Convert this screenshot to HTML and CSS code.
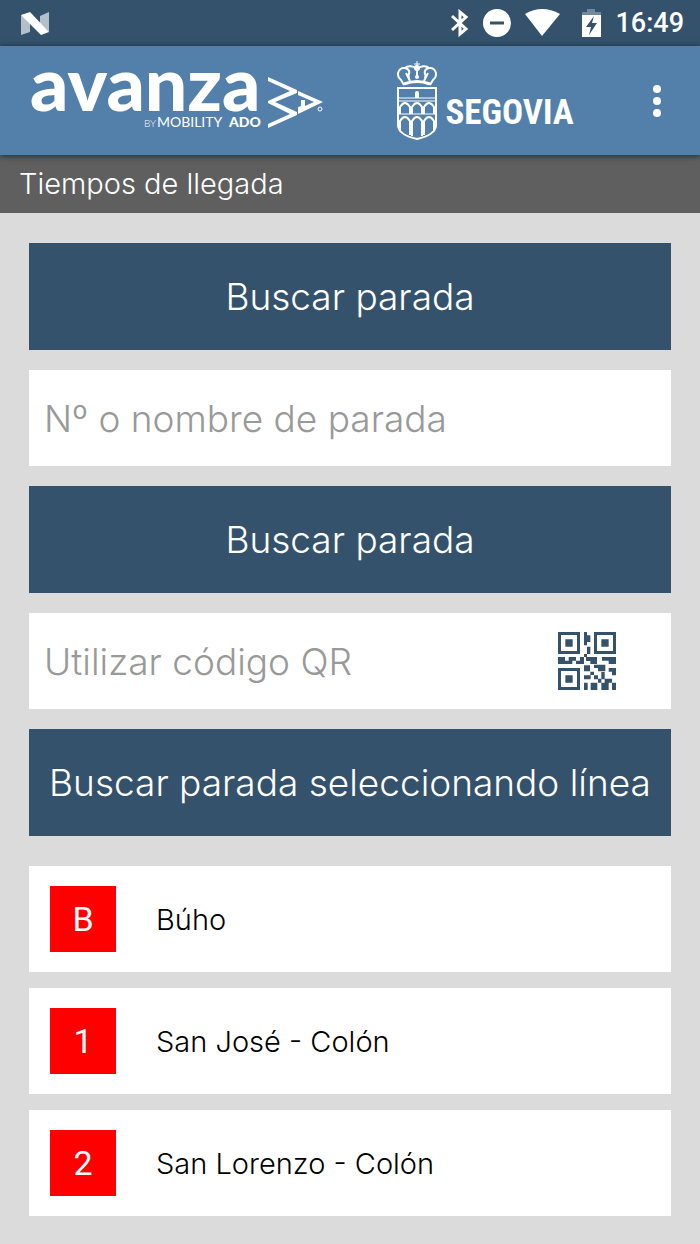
FILE: index.html
```html
<!DOCTYPE html>
<html lang="es">

<head>
    <meta charset="UTF-8">
    <meta name="viewport" content="width=device-width, initial-scale=1.0">
    <title>Tiempos de llegada</title>
    <link rel="stylesheet" href="styles.css">
</head>

<body>

    <div class="status-bar">
        <svg class="android" width="28" height="23" viewBox="0 0 28 23">
            <path d="M0 3L9 9V20L0 23zM19 4L28 0V20L19 12z" fill="#b3c0ca"/>
            <path d="M0 3L9 0L28 20L20 23z" fill="#fff"/>
        </svg>
        <div class="status-icons">
            <svg width="18" height="28" viewBox="0 0 18 28" fill="none" stroke="#fff" stroke-width="3">
                <path d="M1 7L15 20L9 25V3L15 8L1 21"/>
            </svg>
            <svg width="28" height="28" viewBox="0 0 28 28">
                <circle cx="14" cy="14" r="14" fill="#fff"/>
                <path d="M7 14H21" stroke="#34526c" stroke-width="3"/>
            </svg>
            <svg class="wifi" width="35" height="28" viewBox="0 0 35 28">
                <path d="M0 5Q17 -5 35 5L17 27z" fill="#fff"/>
            </svg>
            <svg width="19" height="28" viewBox="0 0 19 28">
                <path d="M0 3H5V0H13V3H19V8H0z" fill="#7188a0"/>
                <path d="M0 6H19V28H0z" fill="#fff"/>
                <path d="M12 7L4 18H9L7 26L15 14H10z" fill="#34526c"/>
            </svg>
            <span class="clock">16:49</span>
        </div>
    </div>

    <header class="header">
        <svg class="avanza" width="294" height="64" viewBox="0 0 294 64" fill="#fff">
            <text class="avanza-name" x="-1" y="42">avanza</text>
            <text class="avanza-by" x="113" y="58">BY</text>
            <text class="avanza-mobility" x="126" y="58">MOBILITY</text>
            <text class="avanza-ado" x="198" y="58">ADO</text>
            <path d="M237 8L266 21V24L244 33L266 43V46L237 59V55L259 45L237 34V32L259 22L237 12z"/>
            <path fill-rule="evenodd" d="M267 22L292 33L267 45V38L270 37V31H274V37L283 33L267 26z"/>
            <circle cx="289" cy="40" r="2" fill="none" stroke="#fff"/>
        </svg>
        <div class="segovia">
            <svg width="40" height="79" viewBox="0 0 40 79" fill="none" stroke="#fff" stroke-width="2">
                <path d="M20 0V6M17 3H23" stroke-width="1"/>
                <path d="M7 24L4 19C-2 14 2 6 8 7C13 8 13 12 11 15M8 7C11 4 17 5 20 8M33 24L36 19C42 14 38 6 32 7C27 8 27 12 29 15M32 7C29 4 23 5 20 8V15M9 12L13 20M31 12L27 20"/>
                <path d="M7 23Q20 18 33 23" stroke-width="3"/>
                <g fill="#fff" stroke="none">
                    <circle cx="20" cy="7" r="3"/>
                    <circle cx="20" cy="16" r="2"/>
                    <circle cx="12" cy="16" r="1"/>
                    <circle cx="28" cy="16" r="1"/>
                </g>
                <path d="M1 27H39V65C38 73 29 76 20 78C11 76 2 73 1 65z"/>
                <path d="M1 37H39M1 40H39M1 53H39" stroke-width="1"/>
                <path d="M19 36V32A1 1 0 0 1 21 32V36z" fill="#fff"/>
                <path d="M3 53V46Q8 38 13 46V53M15 53V46Q20 38 25 46V53M27 53V46Q32 38 37 46V53M3 69V60Q8 52 13 60V74M15 75V60Q20 52 25 60V75M27 74V60Q32 52 37 60V69"/>
            </svg>
            <span class="segovia-name">SEGOVIA</span>
        </div>
        <button class="menu" type="button" aria-label="Menú">
            <svg width="8" height="32" viewBox="0 0 8 32" fill="#fff">
                <circle cx="4" cy="4" r="4"/>
                <circle cx="4" cy="16" r="4"/>
                <circle cx="4" cy="28" r="4"/>
            </svg>
        </button>
    </header>

    <h1 class="title">Tiempos de llegada</h1>

    <main class="content">
        <form class="search">
            <button class="bar" type="submit">Buscar parada</button>
            <input class="field" type="text" aria-label="Nº o nombre de parada" placeholder="Nº o nombre de parada">
            <button class="bar" type="button">Buscar parada</button>
            <button class="field qr" type="button">
                <span>Utilizar código QR</span>
                <svg width="58" height="58" viewBox="0 0 174 174" fill="#34526c">
                    <path fill-rule="evenodd" d="M0 0h66v66H0zM9 9v48h48V9zM108 0h66v66h-66zM117 9v48h48V9zM0 108h66v66H0zM9 117v48h48v-48z"/>
                    <path d="M22 22h22v22H22zM130 22h22v22h-22zM22 130h22v22H22z"/>
                    <path d="M78 0h9v10h10v20h-10v10h-9zM87 44h10v22h-10zM78 66h9v9h-9z"/>
                    <path d="M0 75h21v11h11v10H0zM32 75h22v11H43v10H32zM66 75h12v21H54V86h12zM84 75h33v21H97v-9H84zM132 75h42v21h-22V86h-20z"/>
                    <path d="M78 100h18v18H78zM108 98h34v20h-22v-10h-12zM152 108h22v22h-12v-11h-10zM97 119h11v10H97zM78 130h20v12H78zM108 130h12v10h10v12h-10v-10h-12zM130 120h10v22h-10zM78 152h11v22H78zM98 152h20v22H98zM130 152h22v22h-22zM140 140h22v12h12v22h-12v-22h-22z"/>
                </svg>
            </button>
            <button class="bar" type="button">Buscar parada seleccionando línea</button>
        </form>

        <div class="lines">
            <a class="line" href="#">
                <span class="line-code">B</span>
                <span>Búho</span>
            </a>
            <a class="line" href="#">
                <span class="line-code">1</span>
                <span>San José - Colón</span>
            </a>
            <a class="line" href="#">
                <span class="line-code">2</span>
                <span>San Lorenzo - Colón</span>
            </a>
        </div>
    </main>

</body>

</html>
```

FILE: styles.css
```css
* {
    box-sizing: border-box;
}

body {
    margin: 0;
    background-color: #dbdbdb;
    font-family: Inter, sans-serif;
    font-weight: 300;
}

svg {
    display: block;
    flex-shrink: 0;
}

.status-bar {
    display: flex;
    align-items: center;
    justify-content: space-between;
    height: 46px;
    padding: 0 16px 0 21px;
    background-color: #34526c;
}

.status-icons {
    display: flex;
    align-items: center;
    gap: 14px;
}

.status-icons .wifi {
    margin-right: 8px;
}

.clock {
    color: #fff;
    font-family: Roboto, sans-serif;
    font-size: 27px;
    font-weight: 500;
}

.header {
    position: relative;
    display: flex;
    align-items: center;
    justify-content: space-between;
    height: 109px;
    padding: 0 32px 0 31px;
    background-color: #5380ab;
    box-shadow: 0 1px 6px rgba(0, 0, 0, 0.6);
}

.avanza {
    overflow: visible;
    font-family: Lato, sans-serif;
}

.avanza-name {
    font-size: 75px;
    font-weight: 900;
}

.avanza-by {
    font-size: 10px;
    font-weight: 300;
}

.avanza-mobility {
    font-size: 14px;
    font-weight: 400;
}

.avanza-ado {
    font-size: 14px;
    font-weight: 900;
}

.segovia {
    display: flex;
    align-items: center;
    gap: 8px;
}

.segovia-name {
    padding-top: 24px;
    color: #fff;
    font-family: "Roboto Condensed", "Liberation Sans Narrow", sans-serif;
    font-size: 35px;
    font-weight: 700;
}

.menu {
    padding: 0 7px;
    border: 0;
    background: none;
}

.title {
    margin: 0;
    padding: 0 19px;
    background-color: #5f5f5f;
    color: #fff;
    font-size: 29px;
    font-weight: 300;
    line-height: 58px;
}

.content {
    padding: 30px 29px;
}

.search {
    display: flex;
    flex-direction: column;
    gap: 20px;
}

.bar {
    height: 107px;
    padding: 0;
    border: 0;
    background-color: #34526c;
    color: #fff;
    font: inherit;
    font-size: 37px;
}

.field {
    width: 100%;
    height: 96px;
    padding: 0 15px;
    border: 0;
    border-radius: 0;
    background-color: #fff;
    color: #999;
    font: inherit;
    font-size: 37px;
}

.field::placeholder {
    color: #999;
}

.qr {
    display: flex;
    align-items: center;
    justify-content: space-between;
    padding-right: 55px;
}

.lines {
    display: flex;
    flex-direction: column;
    gap: 16px;
    margin-top: 30px;
}

.line {
    display: flex;
    align-items: center;
    gap: 40px;
    height: 106px;
    padding: 0 21px;
    background-color: #fff;
    color: #000;
    font-size: 29px;
    text-decoration: none;
}

.line-code {
    width: 66px;
    background-color: #f00;
    color: #fff;
    font-family: Roboto, sans-serif;
    font-size: 34px;
    font-weight: 400;
    line-height: 66px;
    text-align: center;
}
```
